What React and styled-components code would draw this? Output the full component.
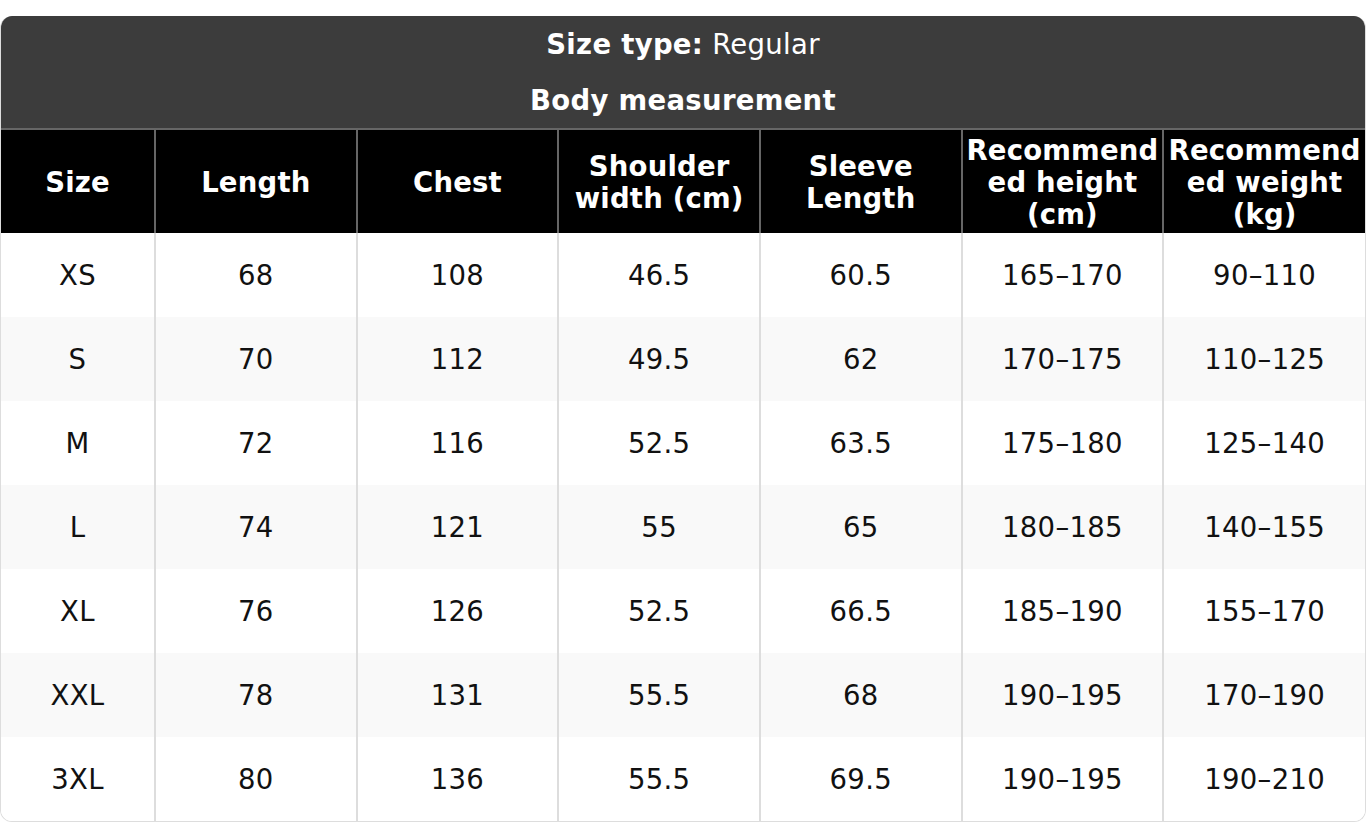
import React from 'react';
import styled, { createGlobalStyle } from 'styled-components';

const GlobalStyle = createGlobalStyle`
  html, body {
    margin: 0;
    padding: 0;
    background: #ffffff;
  }
  body {
    font-family: "DejaVu Sans", Verdana, sans-serif;
  }
`;

const Page = styled.div`
  padding-top: 16px;
`;

const ChartCard = styled.div`
  width: 1366px;
  box-sizing: border-box;
  border: 1px solid #dddddd;
  border-top: none;
  border-radius: 12px;
  overflow: hidden;
  background: #ffffff;
`;

const TitleBar = styled.div`
  background: #3c3c3c;
  color: #ffffff;
  text-align: center;
  font-size: 27.5px;
  line-height: 32px;
  letter-spacing: 0.3px;
`;

const TitleLine = styled.div`
  padding: 12px 0;
  font-weight: ${props => (props.bold ? 700 : 400)};
`;

const Label = styled.span`
  font-weight: 700;
`;

const Table = styled.table`
  width: 100%;
  border-collapse: collapse;
  table-layout: fixed;
  font-size: 27.5px;
  line-height: 32px;
  letter-spacing: 0.3px;
`;

const HeadCell = styled.th`
  background: #000000;
  color: #ffffff;
  font-weight: 700;
  padding: 4px 3px 3px;
  border: 2px solid #666666;
  border-bottom: none;
  text-align: center;
  vertical-align: middle;
  overflow-wrap: anywhere;
  word-break: break-word;
  letter-spacing: 0.2px;

  &:first-child {
    border-left: none;
  }
  &:last-child {
    border-right: none;
  }
`;

const Row = styled.tr`
  background: ${props => (props.shaded ? '#f9f9f9' : '#ffffff')};
`;

const Cell = styled.td`
  padding: 26px 4px;
  color: #111111;
  text-align: center;
  border-left: 2px solid #dddddd;
  border-right: 2px solid #dddddd;

  &:first-child {
    border-left: none;
  }
  &:last-child {
    border-right: none;
  }
`;

const columns = [
  'Size',
  'Length',
  'Chest',
  'Shoulder width (cm)',
  'Sleeve Length',
  'Recommended height (cm)',
  'Recommended weight (kg)',
];

const rows = [
  ['XS', '68', '108', '46.5', '60.5', '165–170', '90–110'],
  ['S', '70', '112', '49.5', '62', '170–175', '110–125'],
  ['M', '72', '116', '52.5', '63.5', '175–180', '125–140'],
  ['L', '74', '121', '55', '65', '180–185', '140–155'],
  ['XL', '76', '126', '52.5', '66.5', '185–190', '155–170'],
  ['XXL', '78', '131', '55.5', '68', '190–195', '170–190'],
  ['3XL', '80', '136', '55.5', '69.5', '190–195', '190–210'],
];

const SizeChart = () => (
  <ChartCard>
    <TitleBar>
      <TitleLine>
        <Label>Size type:</Label> Regular
      </TitleLine>
      <TitleLine bold>Body measurement</TitleLine>
    </TitleBar>
    <Table>
      <colgroup>
        <col style={{ width: 154 }} />
        <col />
        <col />
        <col />
        <col />
        <col />
        <col />
      </colgroup>
      <thead>
        <tr>
          {columns.map(col => (
            <HeadCell key={col}>{col}</HeadCell>
          ))}
        </tr>
      </thead>
      <tbody>
        {rows.map((row, i) => (
          <Row key={row[0]} shaded={i % 2 === 1}>
            {row.map((value, j) => (
              <Cell key={j}>{value}</Cell>
            ))}
          </Row>
        ))}
      </tbody>
    </Table>
  </ChartCard>
);

export default function App() {
  return (
    <>
      <GlobalStyle />
      <Page>
        <SizeChart />
      </Page>
    </>
  );
}
